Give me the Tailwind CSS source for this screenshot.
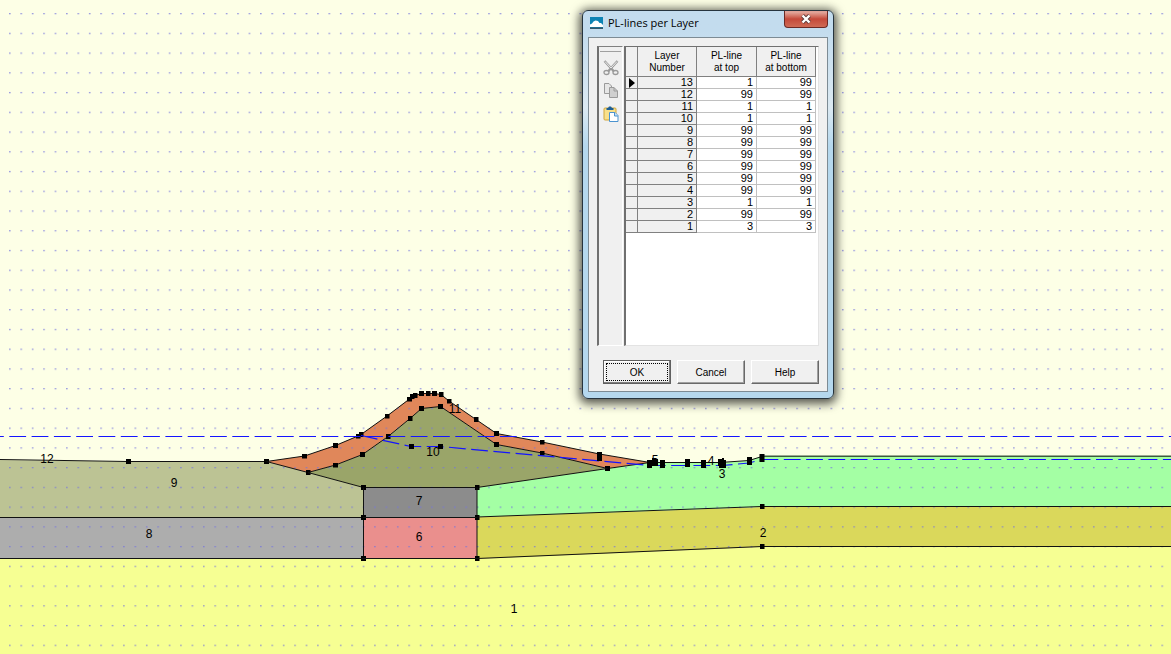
<!DOCTYPE html>
<html lang="en">
<head>
  <meta charset="UTF-8" />
  <meta name="viewport" content="width=device-width, initial-scale=1.0" />
  <title>PL-lines per Layer</title>
  <script src="https://cdn.jsdelivr.net/npm/@tailwindcss/browser@4"></script>
</head>
<body class="relative h-screen overflow-hidden bg-[#fdffe6] font-['Liberation_Sans',Arial,sans-serif] text-black">

  <!-- Cross section -->
  <svg class="block w-full h-full" viewBox="0 0 1171 654" preserveAspectRatio="xMinYMin slice" role="img" aria-label="Dike cross section">
    <defs>
      <pattern id="grid" x="9" y="13" width="11.41" height="19.74" patternUnits="userSpaceOnUse">
        <rect width="1.6" height="1.3" fill="#7474dc" fill-opacity=".75" />
      </pattern>
      <marker id="pt" markerUnits="userSpaceOnUse" markerWidth="5" markerHeight="5" refX="2.5" refY="2.5">
        <rect width="5" height="5" />
      </marker>
    </defs>

    <!-- Soil layers -->
    <path fill="#f6ff93" d="M0 559H477L762 547H1171V654H0z" />
    <path fill="#adadad" d="M0 517H364V559H0z" />
    <path fill="#bcc394" d="M0 460L128 461.5H266L308 472.5L364 487.5V517H0z" />
    <path fill="#8c8c8c" d="M364 487H477V517H364z" />
    <path fill="#ea8f8d" d="M364 517H477V559H364z" />
    <path fill="#dad85b" d="M477 517L762 507H1171V547H762L477 559z" />
    <path fill="#a4ffa4" d="M477 487.5L607.5 468.5L650 462.5L720 463L749 460.5L762 456H1171V507H762L477 517z" />
    <path fill="#9aa569" d="M308 472.5L335.5 465L362.5 454.5L388 436L410 418.5L421.5 408.5L440.5 406.5L496.5 444.5L542 453L607.5 468.5L477 487.5H363.5z" />
    <path fill="#e0875a" d="M266 461.5L304.5 456L335.5 445.5L361 434.5L387 416L409 399L415 395L421.5 393.5H434L441 394.5L449 401L476 419.5L496.5 433.5L542 442L599.5 454L650 462.5L607.5 468.5L542 453L496.5 444.5L440.5 406.5L421.5 408.5L410 418.5L388 436L362.5 454.5L335.5 465L308 472.5z" />
    <rect width="1171" height="654" fill="url(#grid)" />

    <!-- Layer boundaries -->
    <g fill="none" stroke="#111">
      <polyline marker-mid="url(#pt)" points="0,459.5 128.5,461.5 266.5,461.5 304.5,456 335.5,445.5 358,436 361,434.5 387,416 409.5,399 412,396.5 415,395.5 421.5,393.5 428,393.5 434.5,393.5 441,394.5 449,401 476,419.5 496.5,433.5 542,442 599.5,454 650,462.5" />
      <polyline marker-mid="url(#pt)" points="266.5,461.5 308,472.5 335.5,465 362.5,454.5 388,436.5 410,418.5 421.5,408.5 440.5,406.5 496.5,444.5 542,453 607.5,468.5 650,462.5" />
      <polyline marker-mid="url(#pt)" points="308,472.5 363.5,487.5 477,487.5 607.5,468.5" />
      <path d="M650 462.5L720 462.5L749 460.5L762 456.5" />
      <path stroke-width="1.5" stroke="#3d5a3d" d="M762 456.2H1171" />
      <polyline marker-mid="url(#pt)" points="0,517.5 363.5,517.5 363.5,558.5 363.5,487.5" />
      <polyline marker-mid="url(#pt)" points="477,487 477,517.5 477,558.5 477,558.5" />
      <path d="M363 517.5H477M0 558.5H477" />
      <polyline marker-mid="url(#pt)" points="477,517 762,506.5 1171,506.5" />
      <polyline marker-mid="url(#pt)" points="477,558.5 762,546.5 1171,546.5" />
    </g>

    <!-- PL-lines -->
    <g fill="none" stroke="#1414ff" stroke-width="1.2" stroke-dasharray="16.8 5.5">
      <path stroke-dashoffset="13" d="M0 436.5H1171" />
      <path d="M361 435.5L411 446.5H440.5L650 465.5H722L749 463L762 459.5" />
      <path stroke="#0a0aff" d="M761.5 459.5H1171" />
    </g>
    <g>
      <path d="M409 444h5v5h-5zM438 444h5v5h-5zM597 452h5v9h-5z" />
      <path d="M647 460h5v-2h4v1h2v7h-6v2h-5zM660 460h5v8h-5zM685 459h5v8h-5zM701 460h5v8h-5zM718 459h4v-1h2v2h2v8h-7v-2h-1zM747 457h5v8h-5zM759.500 454h5v8h-5z" />
    </g>

    <!-- Layer numbers -->
    <g font-size="12" text-anchor="middle">
      <text x="47" y="463">12</text>
      <text x="174" y="487">9</text>
      <text x="149" y="538">8</text>
      <text x="455" y="413">11</text>
      <text x="433" y="456">10</text>
      <text x="419" y="505">7</text>
      <text x="419" y="541">6</text>
      <text x="655" y="464">5</text>
      <text x="711" y="465">4</text>
      <text x="722" y="478">3</text>
      <text x="763" y="537">2</text>
      <text x="514" y="613">1</text>
    </g>
  </svg>

  <!-- Dialog -->
  <section role="dialog" aria-labelledby="dlgTitle" class="absolute left-[582px] top-[10px] w-[252px] rounded-md border border-[#26343e] bg-linear-to-b from-[#c3dcee] from-5% via-[#dbe9f2] via-25% to-[#b5d8ee] to-35% px-[5px] pb-[6px] shadow-[0_2px_10px_3px_rgba(0,0,0,0.65)]">
    <header class="flex h-[26px] items-start">
      <svg class="mt-[6px] ml-[2px] h-[12px] w-[13px]" viewBox="0 0 13 12">
        <path fill="#0d83b4" d="M0 0H13V12H0z" />
        <path fill="#fff" d="M0 7.500L2 6.500L3.500 4.500L5.500 3.500L8 4L9.500 6L11 6L13 8V10H0z" />
        <path fill="#33576b" d="M0 10.500H13V12H0z" />
      </svg>
      <h1 id="dlgTitle" class="ml-[5px] mt-[3px] flex-1 font-['Open_Sans',sans-serif] text-[11px] leading-[18px] whitespace-nowrap">PL-lines per Layer</h1>
      <button aria-label="Close" class="flex h-[17px] w-[44px] items-center justify-center rounded-b-[4px] border border-t-0 border-[#6b2a25] bg-linear-to-b from-[#e0a196] from-10% via-[#c4493a] via-50% to-[#cf6a55]">
        <svg class="h-[10px] w-[12px]" viewBox="0 0 12 10">
          <path d="M2.500 1.500L9.500 8.500M9.500 1.500L2.500 8.500" stroke="#5a3a3a" stroke-width="4" />
          <path d="M2.500 1.500L9.500 8.500M9.500 1.500L2.500 8.500" stroke="#fff" stroke-width="2.400" />
        </svg>
      </button>
    </header>

    <div class="border border-[#7d8b94] bg-[#f0f0f0] px-2 pt-2 pb-[7px]">
      <div class="flex h-[300px]">
        <!-- Edit tools -->
        <div class="flex w-[26px] flex-col items-center border-t border-r border-b border-l-2 border-t-[#808080] border-l-[#707070] border-r-white border-b-white pt-1">
          <hr class="mb-2 w-[21px] border-[#a0a0a0]" />
          <div class="flex flex-col gap-[7px]">
            <button aria-label="Cut" class="h-4 w-4">
              <svg viewBox="0 0 16 16" fill="none" stroke="#9a9a9a">
                <path stroke-width="2.400" d="M1.500 1L11 11.500M14.500 1L5 11.500" />
                <path stroke="#ececec" d="M2 1.500L8 8M14 1.500L8 8" />
                <ellipse cx="3.500" cy="12.500" rx="2.500" ry="2" stroke-width="1.300" />
                <ellipse cx="12.500" cy="12.500" rx="2.500" ry="2" stroke-width="1.300" />
              </svg>
            </button>
            <button aria-label="Copy" class="h-4 w-4">
              <svg viewBox="0 0 16 16" stroke="#9a9a9a">
                <path fill="#e6e6e6" d="M1.500 .5H6L8.500 3V10.500H1.500z" />
                <path fill="#cfcfcf" d="M6.500 4.500H11L14.500 8V14.500H6.500z" />
                <path fill="none" d="M11 4.500V8H14.500" />
              </svg>
            </button>
            <button aria-label="Paste" class="h-4 w-4">
              <svg viewBox="0 0 16 16">
                <rect x="1" y="2" width="12" height="12" rx="1" fill="#f8e08a" stroke="#d0a63c" />
                <path fill="#1f5f94" d="M3.500 4V2H5L6 .5H8L9 2H10.500V4z" />
                <path fill="#fff" stroke="#4b93cf" d="M6.500 6.500H12L15 9.500V15.500H6.500z" />
                <path fill="#c4e0f6" stroke="#4b93cf" d="M11.500 6.500V10H15" />
              </svg>
            </button>
          </div>
        </div>

        <!-- Layer table -->
        <div class="ml-px flex-1 border-t border-r border-b border-l-2 border-t-[#707070] border-l-[#707070] border-r-[#e3e3e3] border-b-[#e3e3e3] bg-white">
          <table class="w-[190px] table-fixed border-separate border-spacing-0 text-[11px]">
            <colgroup>
              <col class="w-[12px]" />
              <col class="w-[59px]" />
              <col class="w-[60px]" />
              <col class="w-[59px]" />
            </colgroup>
            <thead class="bg-[#f0f0f0] text-[10px] leading-3">
              <tr class="h-[30px]">
                <th class="border-r border-b border-[#808080] p-0"></th>
                <th scope="col" class="border-r border-b border-[#808080] p-0 font-normal">Layer<br />Number</th>
                <th scope="col" class="border-r border-b border-[#808080] p-0 font-normal">PL-line<br />at top</th>
                <th scope="col" class="border-r border-b border-[#808080] p-0 font-normal">PL-line<br />at bottom</th>
              </tr>
            </thead>
            <tbody id="rows" class="text-right leading-[11px]"></tbody>
          </table>
        </div>
      </div>

      <div class="mt-[14px] ml-1.5 grid h-6 grid-cols-3 gap-1.5 text-[10px]">
        <button class="border border-[#606060] p-px shadow-[inset_-1px_-1px_0_#808080,inset_1px_1px_0_#fff]">
          <span class="m-px flex h-[18px] items-center justify-center border border-dotted border-black">OK</span>
        </button>
        <button class="border border-t-white border-l-white border-r-[#696969] border-b-[#696969] shadow-[inset_-1px_-1px_0_#a0a0a0]">Cancel</button>
        <button class="border border-t-white border-l-white border-r-[#696969] border-b-[#696969] shadow-[inset_-1px_-1px_0_#a0a0a0]">Help</button>
      </div>
    </div>
  </section>

  <script>
    // layer, PL-line at top, PL-line at bottom
    const layers = [
      [13, 1, 99], [12, 99, 99], [11, 1, 1], [10, 1, 1], [9, 99, 99],
      [8, 99, 99], [7, 99, 99], [6, 99, 99], [5, 99, 99], [4, 99, 99],
      [3, 1, 1], [2, 99, 99], [1, 3, 3],
    ];
    const arrow = `<svg class="mx-auto block h-[10px] w-[6px]" viewBox="0 0 6 10"><path d="M0 0L6 5L0 10z" /></svg>`;

    document.getElementById("rows").innerHTML = layers.map(([layer, top, bottom], i) => `
      <tr class="h-3">
        <td class="border-r border-b border-[#808080] bg-[#f0f0f0] p-0">${i === 0 ? arrow : ""}</td>
        <th scope="row" class="border-r border-b border-[#808080] bg-[#f0f0f0] py-0 pr-[3px] pl-0 text-right font-normal">${layer}</th>
        <td class="border-r border-b border-[#c0c0c0] py-0 pr-[3px] pl-0">${top}</td>
        <td class="border-r border-b border-[#c0c0c0] py-0 pr-[3px] pl-0">${bottom}</td>
      </tr>`).join("");
  </script>
</body>
</html>
